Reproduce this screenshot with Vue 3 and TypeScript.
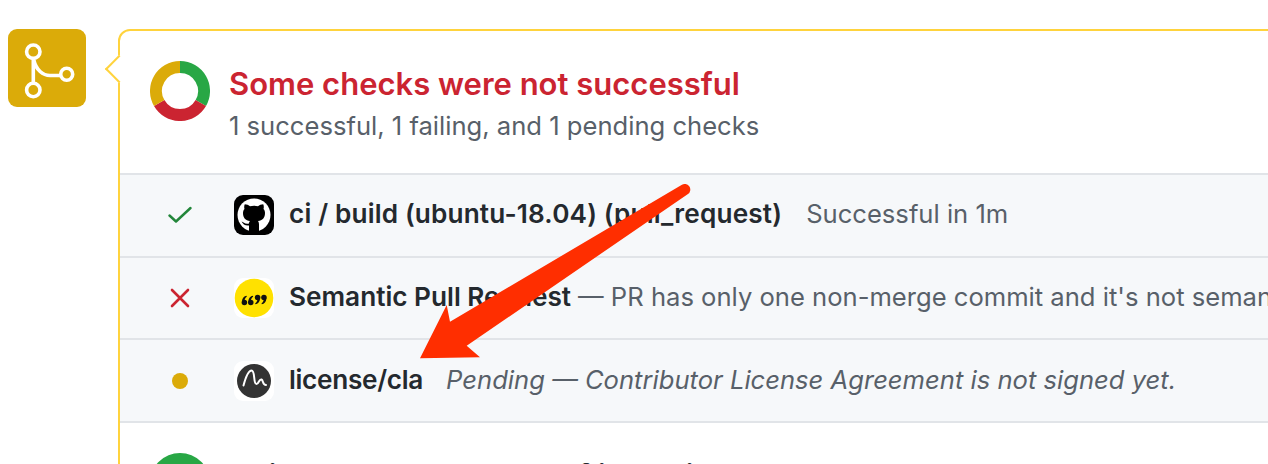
<script setup lang="ts">
interface Check {
  status: 'ok' | 'fail' | 'pending'
  name: string
  detail: string
  italic?: boolean
  logo: 'github' | 'semantic' | 'cla'
}
const checks: Check[] = [
  { status: 'ok', logo: 'github', name: 'ci / build (ubuntu-18.04) (pull_request)', detail: 'Successful in 1m' },
  { status: 'fail', logo: 'semantic', name: 'Semantic Pull Request', detail: "— PR has only one non-merge commit and it's not semantic; add another commit before squashing" },
  { status: 'pending', logo: 'cla', name: 'license/cla', detail: 'Pending — Contributor License Agreement is not signed yet.', italic: true },
]
</script>

<template>
  <div class="page">
    <div class="merge-icon">
      <svg width="78" height="78" viewBox="0 0 78 78" fill="none" stroke="#fff" stroke-width="3.600">
        <circle cx="25.300" cy="22.700" r="6.700" />
        <circle cx="25.300" cy="61" r="6.700" />
        <circle cx="58.700" cy="45.300" r="6" />
        <path d="M25.300 30V54" />
        <path d="M25.800 31C28 41 35 46.500 42 46.500H52" />
      </svg>
    </div>
    <div class="box">
      <span class="caret"></span>
      <header class="head">
        <svg class="donut" width="60" height="60" viewBox="0 0 60 60" fill="none" stroke-width="12">
          <path d="M30 6A24 24 0 0 1 50.800 42" stroke="#28a745" />
          <path d="M50.800 42A24 24 0 0 1 9.200 42" stroke="#cb2431" />
          <path d="M9.200 42A24 24 0 0 1 30 6" stroke="#dbab09" />
        </svg>
        <div>
          <h3 class="title">Some checks were not successful</h3>
          <p class="sub">1 successful, 1 failing, and 1 pending checks</p>
        </div>
      </header>
      <ul class="list">
        <li v-for="c in checks" :key="c.name" class="row" :class="c.status">
          <span class="status">
            <svg v-if="c.status === 'ok'" width="24" height="24" viewBox="0 0 24 24" fill="none" stroke="#22863a" stroke-width="2.400" stroke-linecap="round" stroke-linejoin="round"><path d="M1.500 12.500L8 18.500L22.500 5" /></svg>
            <svg v-else-if="c.status === 'fail'" width="24" height="24" viewBox="0 0 24 24" fill="none" stroke="#cb2431" stroke-width="2.600" stroke-linecap="round"><path d="M4 4L20 20M20 4L4 20" /></svg>
            <span v-else class="dot"></span>
          </span>
          <span class="logo">
            <svg v-if="c.logo === 'github'" width="40" height="40" viewBox="0 0 40 40">
              <rect width="40" height="40" rx="9" fill="#000" />
              <circle cx="20" cy="20" r="16.500" fill="#fff" />
              <path fill="#000" d="M15 37V30.500C11 31 9 29 7.500 26.500C9.500 27 11 29.500 15 28.500C15 27.500 15.500 26.500 16 26C11.500 25.500 9 23 9 18C9 16.500 9.500 15 10.500 14C10 12.500 10.100 10.500 10.800 9.300C12.500 9.300 14.800 10.300 16 11.200C18.500 10.500 21.500 10.500 24 11.200C25.200 10.300 27.500 9.300 29.200 9.300C29.900 10.500 30 12.500 29.500 14C30.500 15 31 16.500 31 18C31 23 28.500 25.500 24 26C24.700 26.800 25 28 25 29.500V37Z" />
            </svg>
            <svg v-else-if="c.logo === 'semantic'" width="40" height="40" viewBox="0 0 40 40">
              <rect width="40" height="40" rx="9" fill="#fff" />
              <circle cx="20" cy="20" r="19.300" fill="#ffe100" />
              <g fill="#111" transform="translate(20 22) scale(1.200) translate(-20 -20.500)">
                <circle cx="12" cy="22.500" r="2.300" /><path d="M10 22C10 19 11.800 17.300 13.800 17L14 17.800C12.800 18.500 12 20 12 22Z" />
                <circle cx="17.300" cy="22.500" r="2.300" /><path d="M15.300 22C15.300 19 17.100 17.300 19.100 17L19.300 17.800C18.100 18.500 17.300 20 17.300 22Z" />
                <circle cx="23" cy="18.500" r="2.300" /><path d="M25 19C25 22 23.200 23.700 21.200 24L21 23.200C22.200 22.500 23 21 23 19Z" />
                <circle cx="28.300" cy="18.500" r="2.300" /><path d="M30.300 19C30.300 22 28.500 23.700 26.500 24L26.300 23.200C27.500 22.500 28.300 21 28.300 19Z" />
              </g>
            </svg>
            <svg v-else width="40" height="40" viewBox="0 0 40 40">
              <rect width="40" height="40" rx="9" fill="#fff" />
              <circle cx="20" cy="20" r="17" fill="#333" />
              <path d="M9.500 24.500C11.500 17 14.500 9.500 17.500 9.500C21.500 9.500 19 23 22.500 23C25 23 25 17.500 27.500 18.500C29.500 19.500 28.500 24 32 24" fill="none" stroke="#fff" stroke-width="2" stroke-linecap="round" />
            </svg>
          </span>
          <strong class="name">{{ c.name }}</strong>
          <span class="detail" :class="{ italic: c.italic }">{{ c.detail }}</span>
        </li>
      </ul>
      <div class="next">
        <span class="ok-circle"></span>
        <strong class="next-title">This branch has no conflicts with the base branch</strong>
      </div>
    </div>
    <svg class="arrow" width="300" height="200" viewBox="0 0 300 200">
      <path fill="#ff2e00" d="M281.500 15L50 151.700L46.700 135L20 188.300L80 187.300L66.700 175.700L288 24A5 5 0 0 0 281.500 15Z" />
    </svg>
  </div>
</template>

<style>
html, body { margin: 0; background: #fff; overflow: hidden; }
</style>

<style scoped>
.page {
  position: relative;
  width: 1268px;
  height: 464px;
  overflow: hidden;
  padding: 29px 0 0 8px;
  box-sizing: border-box;
  display: flex;
  gap: 32px;
  font-family: Inter, "Liberation Sans", sans-serif;
}
.merge-icon {
  width: 78px;
  height: 78px;
  flex: none;
  border-radius: 9px;
  background: #dbab09;
  display: flex;
}
.box {
  position: relative;
  flex: none;
  width: 1200px;
  height: 520px;
  border: 2px solid #ffd33d;
  border-radius: 12px 0 0 0;
  box-sizing: border-box;
}
.caret {
  position: absolute;
  left: -11px;
  top: 28px;
  width: 20px;
  height: 20px;
  background: #fff;
  border-left: 2px solid #ffd33d;
  border-bottom: 2px solid #ffd33d;
  transform: rotate(45deg);
  box-sizing: border-box;
}
.head {
  display: flex;
  gap: 19px;
  height: 142px;
  padding: 30px 0 0 30px;
  box-sizing: border-box;
}
.donut { flex: none; }
.title {
  margin: 0;
  font-size: 31px;
  line-height: 46px;
  font-weight: 600;
  color: #cb2431;
}
.sub {
  margin: 0;
  font-size: 25.600px;
  line-height: 38px;
  color: #586069;
}
.list { list-style: none; margin: 0; padding: 0; }
.row {
  display: flex;
  align-items: center;
  height: 80.700px;
  border-top: 2px solid #e1e4e8;
  background: #f6f8fa;
  white-space: nowrap;
}
.row:last-child { border-bottom: 2px solid #e1e4e8; }
.status {
  width: 60px;
  margin-left: 30px;
  display: flex;
  justify-content: center;
  flex: none;
}
.dot { width: 16px; height: 16px; border-radius: 50%; background: #dbab09; }
.logo { display: flex; margin-left: 24px; margin-right: 15px; flex: none; }
.name { font-size: 26.200px; font-weight: 600; color: #24292e; padding-bottom: 3px; }
.detail { font-size: 25.600px; color: #586069; margin-left: 7px; padding-bottom: 3px; }
.ok .name { letter-spacing: 0.150px; }
.ok .detail { margin-left: 24px; }
.fail .name, .fail .detail { padding-bottom: 4px; }
.pending .name { letter-spacing: -0.300px; }
.pending .detail { margin-left: 23px; }
.italic { font-style: italic; }
.next { display: flex; gap: 19px; padding: 30px 0 0 30px; }
.ok-circle { width: 60px; height: 60px; border-radius: 50%; background: #28a745; flex: none; }
.next-title { font-size: 31px; font-weight: 600; color: #24292e; line-height: 46px; }
.arrow { position: absolute; left: 400px; top: 170px; }
</style>
